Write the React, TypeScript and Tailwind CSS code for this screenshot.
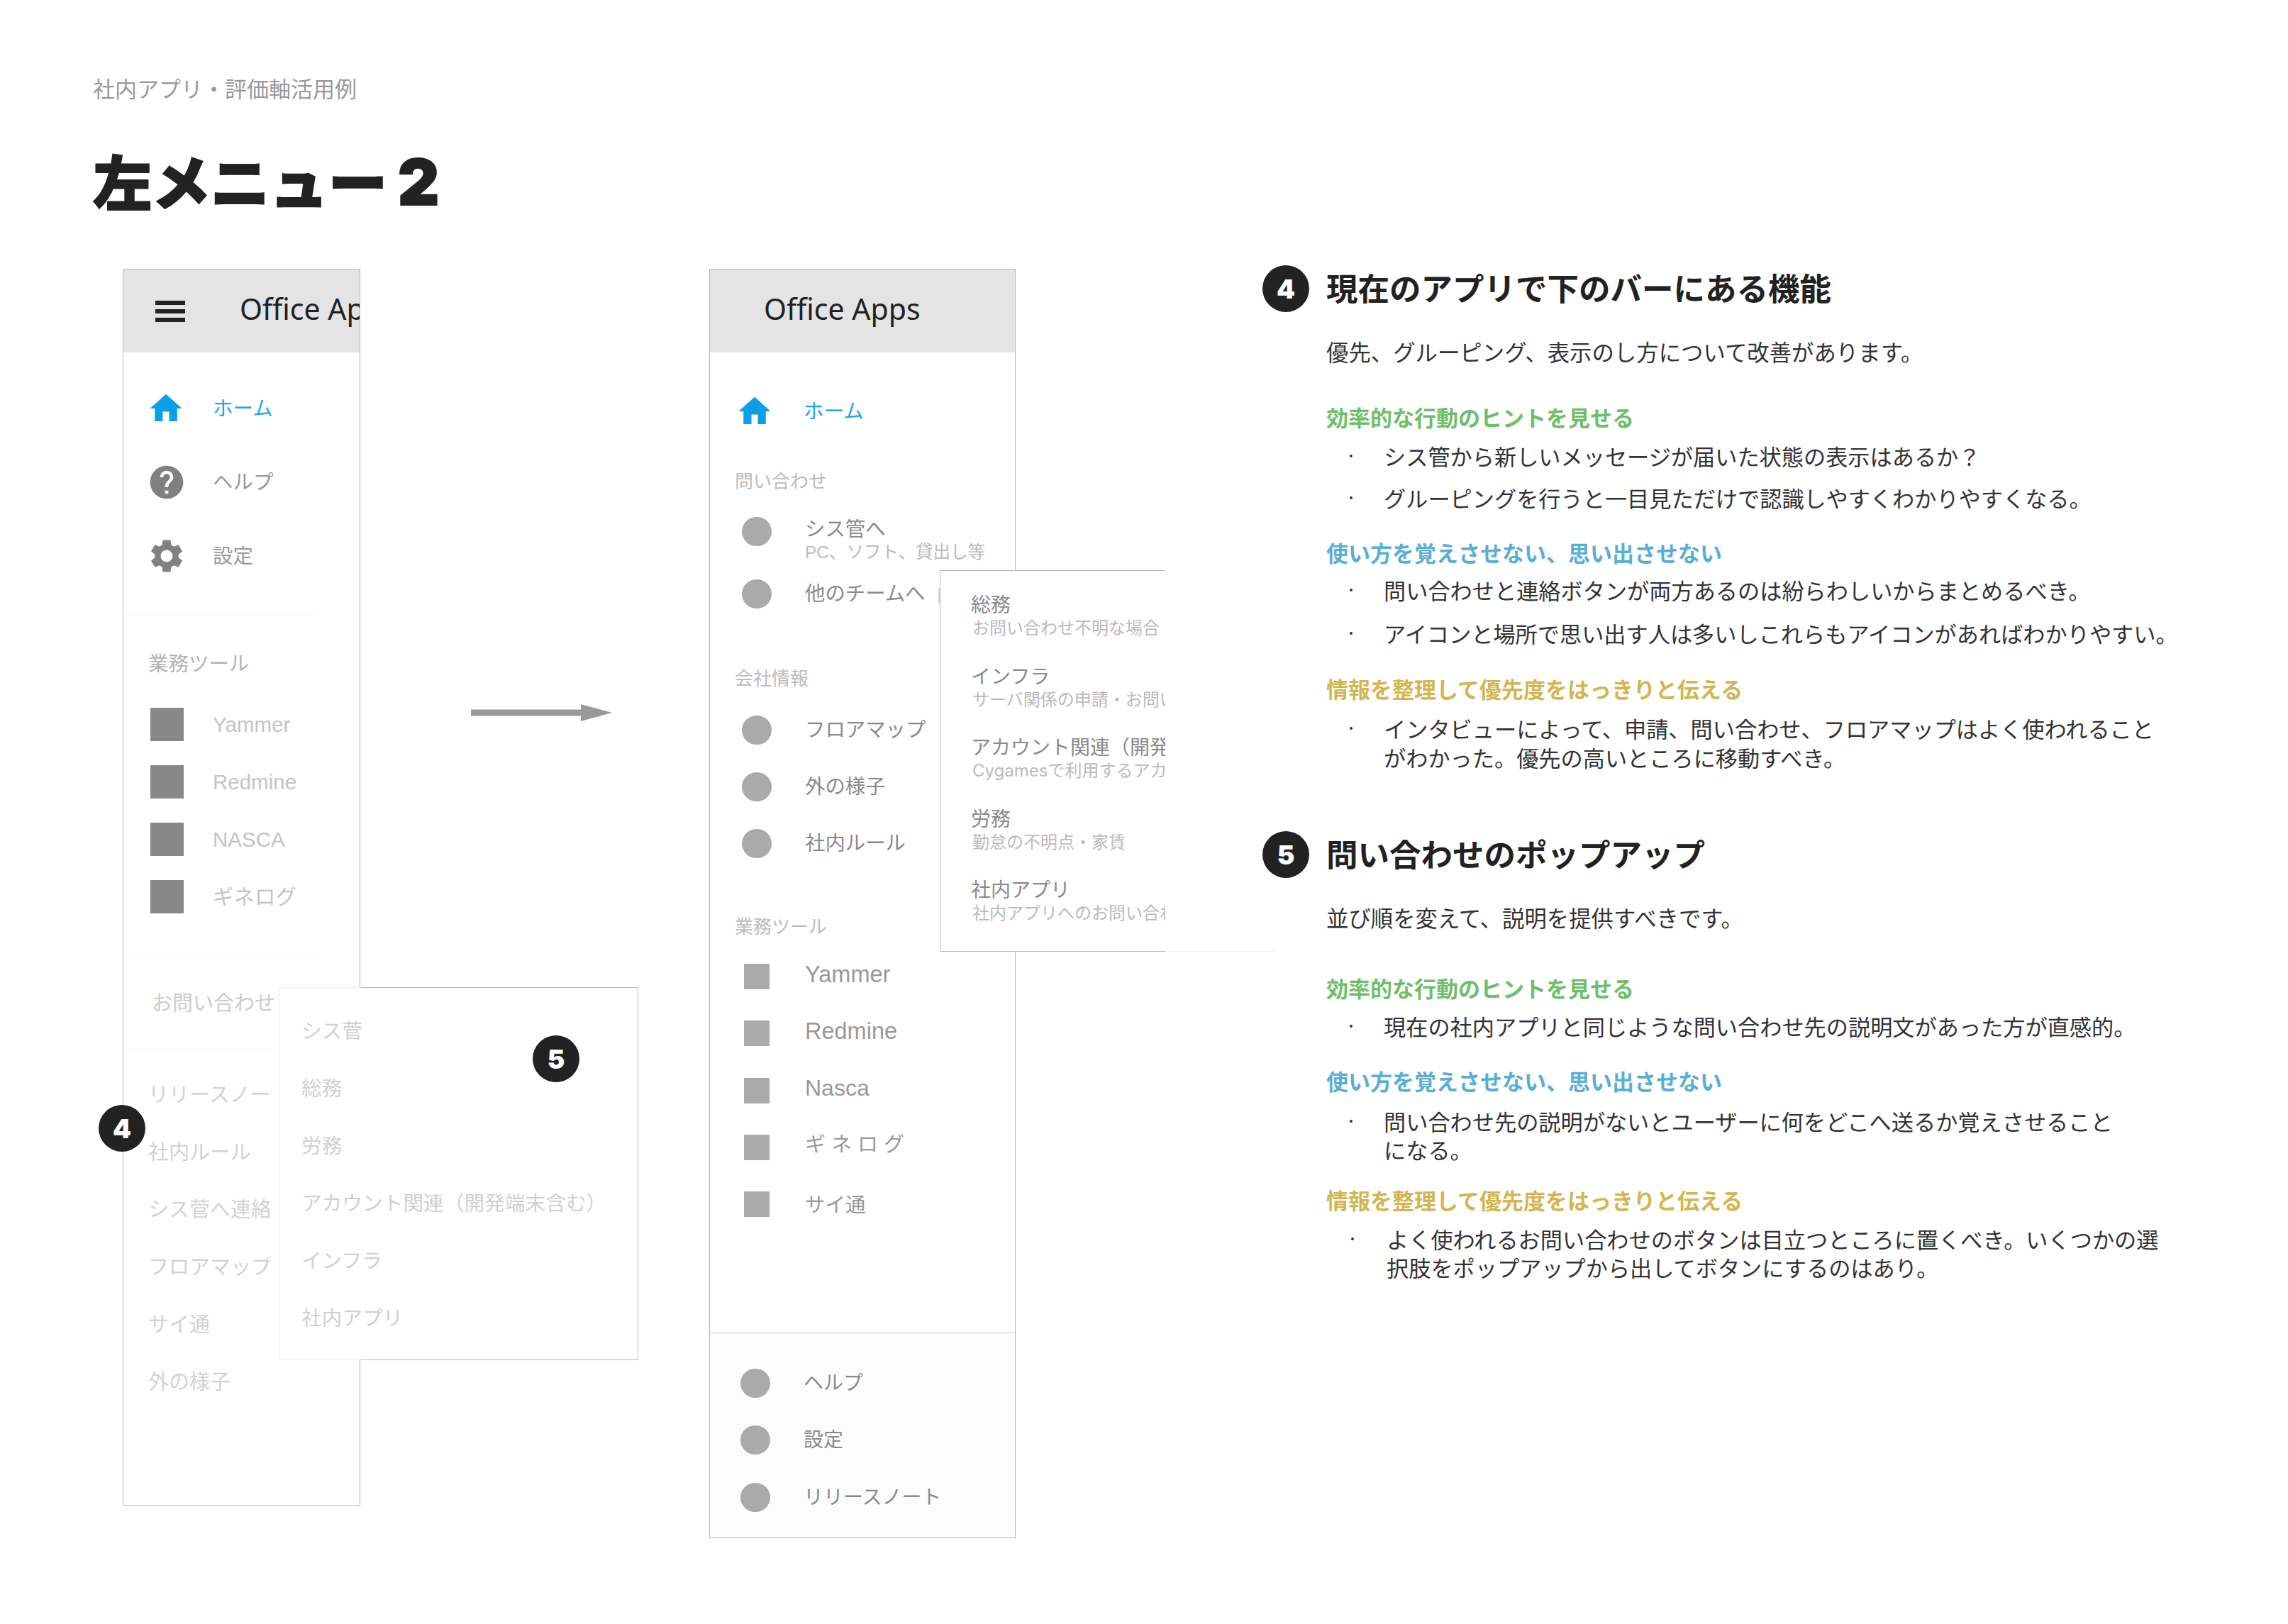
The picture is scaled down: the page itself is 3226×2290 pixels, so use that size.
import { MdHelp, MdHome, MdSettings } from "react-icons/md";

function Badge({ n, className = "" }: { n: number; className?: string }) {
  return (
    <div
      className={`flex h-[66px] w-[66px] shrink-0 items-center justify-center rounded-full bg-[#222222] font-['Inter',sans-serif] text-[37px] leading-none font-black text-white ${className}`}
    >
      {n}
    </div>
  );
}

function SideRow({
  icon,
  slot,
  label,
  height,
  color,
}: {
  icon?: React.ReactNode;
  slot: string;
  label: string;
  height: string;
  color: string;
}) {
  return (
    <div className={`flex items-center ${height}`}>
      <div className={`flex shrink-0 items-center ${slot}`}>{icon}</div>
      <span className={`whitespace-nowrap leading-none ${color}`}>{label}</span>
    </div>
  );
}

function LeftPanel() {
  const tools = ["Yammer", "Redmine", "NASCA", "ギネログ"];
  const links = ["リリースノート", "社内ルール", "シス菅へ連絡", "フロアマップ", "サイ通", "外の様子"];
  const popupItems = ["シス菅", "総務", "労務", "アカウント関連（開発端末含む）", "インフラ", "社内アプリ"];

  return (
    <div className="relative ml-[42px] h-[1744px] w-[335px] shrink-0 border border-[#b8b8b8] bg-white">
      {/* Header */}
      <div className="flex h-[117px] items-center overflow-hidden bg-[#e4e4e4]">
        <div className="ml-[45px] flex w-[42px] shrink-0 flex-col gap-[6px]">
          <div className="h-[6px] bg-[#222222]" />
          <div className="h-[6px] bg-[#222222]" />
          <div className="h-[6px] bg-[#222222]" />
        </div>
        <span className="-mt-[6px] ml-[77px] whitespace-nowrap font-['Noto_Sans',sans-serif] text-[41px] text-[#222222]">
          Office Apps
        </span>
      </div>

      <div className="pt-[27px]">
        <SideRow
          height="h-[104px]"
          slot="w-[126px] pl-[33px]"
          color="-mt-[4px] text-[28.5px] text-[#1ea6ea]"
          label="ホーム"
          icon={<MdHome size={54} color="#0a9fe6" />}
        />
        <SideRow
          height="h-[104px]"
          slot="w-[126px] pl-[33px]"
          color="-mt-[4px] text-[28.5px] text-[#999999]"
          label="ヘルプ"
          icon={<MdHelp size={56} color="#808080" />}
        />
        <SideRow
          height="h-[104px]"
          slot="w-[126px] pl-[33px]"
          color="-mt-[4px] text-[28.5px] text-[#999999]"
          label="設定"
          icon={<MdSettings size={56} color="#808080" />}
        />
      </div>

      <div className="mt-[30px] h-px w-[269px] bg-[#f6f6f6]" />

      <div className="mt-[47px] flex h-[40px] items-center pl-[35px] text-[28.5px] text-[#b4b4b4]">業務ツール</div>
      <div className="mt-[27px]">
        {tools.map((t) => (
          <SideRow
            key={t}
            height="h-[81px]"
            slot="w-[126px] pl-[38px]"
            color="font-['Liberation_Sans','Noto_Sans_CJK_JP',sans-serif] text-[29.5px] text-[#c4c4c4]"
            label={t}
            icon={<div className="h-[47px] w-[47px] bg-[#888888]" />}
          />
        ))}
      </div>

      <div className="mt-[44px] h-px w-[269px] bg-[#f6f6f6]" />
      <div className="-mt-[4px] flex h-[134px] items-center pl-[40px] text-[29px] text-[#cccccc]">お問い合わせ</div>
      <div className="h-px bg-[#f6f6f6]" />

      <div className="mt-[20px] w-[207px] overflow-hidden pl-[35px]">
        {links.map((l) => (
          <div key={l} className="flex h-[81px] items-center text-[29px] whitespace-nowrap text-[#d2d2d2]">
            {l}
          </div>
        ))}
      </div>

      {/* Popup */}
      <div className="absolute top-[1012px] left-[220px] h-[526px] w-[506px] border border-[#bbbbbb] border-l-[#ededed] bg-white pt-[18px] pl-[30px]">
        <div className="absolute -top-px -left-px h-px w-[115px] bg-[#ededed]" />
        <div className="absolute -bottom-px -left-px h-px w-[115px] bg-[#ededed]" />
        {popupItems.map((p) => (
          <div key={p} className="flex h-[81px] items-center text-[28.7px] whitespace-nowrap text-[#d0d0d0]">
            {p}
          </div>
        ))}
        <Badge n={5} className="absolute top-[67px] left-[356px]" />
      </div>

      <Badge n={4} className="absolute top-[1178px] -left-[35px]" />
    </div>
  );
}

function Arrow() {
  return (
    <svg viewBox="0 0 199 24" className="mt-[614px] ml-[156px] h-[24px] w-[199px] shrink-0">
      <rect x="0" y="7.5" width="156" height="9" fill="#999999" />
      <polygon points="155,0 199,12 155,24" fill="#999999" />
    </svg>
  );
}

function MidRow({ label, sub, h = "h-[80px]" }: { label: string; sub?: string; h?: string }) {
  return (
    <div className={`flex items-center pl-[45px] ${h}`}>
      <div className="h-[41px] w-[42px] shrink-0 rounded-full bg-[#aaaaaa]" />
      <div className={`ml-[47px] whitespace-nowrap ${sub ? "mt-[26px]" : "-mt-[4px]"}`}>
        <div className="text-[28.4px] leading-[34px] text-[#8a8a8a]">{label}</div>
        {sub && (
          <div className="font-['Liberation_Sans','Noto_Sans_CJK_JP',sans-serif] text-[24.5px] leading-[36px] text-[#bbbbbb]">
            {sub}
          </div>
        )}
      </div>
    </div>
  );
}

function MidLabel({ text, className }: { text: string; className: string }) {
  return <div className={`flex h-[40px] items-center pl-[35px] text-[26px] text-[#bcbcbc] ${className}`}>{text}</div>;
}

function MidPanel() {
  const tools = [
    { name: "Yammer", cls: "-mt-[6px] text-[32.5px]" },
    { name: "Redmine", cls: "-mt-[6px] text-[32.5px]" },
    { name: "Nasca", cls: "-mt-[8px] text-[32px]" },
    { name: "ギネログ", cls: "-mt-[6px] text-[29px] tracking-[8px]" },
    { name: "サイ通", cls: "mt-[2px] text-[28.5px]" },
  ];
  const footer = ["ヘルプ", "設定", "リリースノート"];
  const popup = [
    ["総務", "お問い合わせ不明な場合"],
    ["インフラ", "サーバ関係の申請・お問い合わせ"],
    ["アカウント関連（開発端末含む）", "Cygamesで利用するアカウント"],
    ["労務", "勤怠の不明点・家賃"],
    ["社内アプリ", "社内アプリへのお問い合わせ"],
  ];

  return (
    <div className="relative ml-[137px] flex h-[1790px] w-[432px] shrink-0 flex-col border border-[#b8b8b8] bg-white">
      <div className="flex h-[117px] shrink-0 items-center bg-[#e4e4e4] pb-[6px] pl-[76px] font-['Noto_Sans',sans-serif] text-[41px] text-[#222222]">
        Office Apps
      </div>

      <div className="mt-[43px] flex h-[80px] items-center pl-[36px]">
        <MdHome size={54} color="#0a9fe6" className="shrink-0" />
        <span className="-mt-[4px] ml-[42px] text-[28.5px] leading-none text-[#1ea6ea]">ホーム</span>
      </div>

      <MidLabel text="問い合わせ" className="mt-[36px]" />
      <div className="mt-[9px]">
        <MidRow h="h-[88px]" label="シス管へ" sub="PC、ソフト、貸出し等" />
        <MidRow h="h-[88px]" label="他のチームへ" />
      </div>

      <MidLabel text="会社情報" className="mt-[53px]" />
      <div className="mt-[15px]">
        <MidRow label="フロアマップ" />
        <MidRow label="外の様子" />
        <MidRow label="社内ルール" />
      </div>

      <MidLabel text="業務ツール" className="mt-[55px]" />
      <div className="mt-[13px]">
        {tools.map((t) => (
          <div key={t.name} className="flex h-[80.25px] items-center pl-[48px]">
            <div className="h-[36px] w-[36px] shrink-0 bg-[#aaaaaa]" />
            <span
              className={`ml-[50px] font-['Liberation_Sans','Noto_Sans_CJK_JP',sans-serif] whitespace-nowrap text-[#999999] ${t.cls}`}
            >
              {t.name}
            </span>
          </div>
        ))}
      </div>

      <div className="mt-auto h-[289px] border-t border-[#cccccc] bg-[#fcfcfc] pt-[30px]">
        {footer.map((f) => (
          <div key={f} className="flex h-[80.5px] items-center pl-[43px]">
            <div className="h-[41px] w-[42px] shrink-0 rounded-full bg-[#aaaaaa]" />
            <span className="-mt-[5px] ml-[47px] text-[28px] text-[#8a8a8a]">{f}</span>
          </div>
        ))}
      </div>

      <div className="absolute top-[449px] left-[322px] h-[22px] w-[2px] bg-[#d4d4d4]" />

      {/* Popup, cut off at its right edge */}
      <div className="absolute top-[424px] left-[324px] h-[538px] w-[318px] overflow-hidden border-y border-l border-[#b8b8b8] bg-white">
        <div className="pt-[29px]">
          {popup.map(([title, sub]) => (
            <div key={title} className="h-[100.5px] pl-[43px] whitespace-nowrap">
              <div className="text-[28px] leading-[34px] text-[#8a8a8a]">{title}</div>
              <div className="pl-[2px] font-['Inter','Noto_Sans_CJK_JP',sans-serif] text-[24px] leading-[35px] text-[#bbbbbb]">
                {sub}
              </div>
            </div>
          ))}
        </div>
      </div>
      <div className="absolute top-[961px] left-[642px] h-px w-[154px] bg-[#eeeeee]" />
    </div>
  );
}

function Bullet({ children, wide = false, className = "" }: { children: React.ReactNode; wide?: boolean; className?: string }) {
  return (
    <div className={`flex ${wide ? "pl-[125px]" : "pl-[123px]"} ${className}`}>
      <div className="mt-[18px] h-[4px] w-[4px] shrink-0 rounded-full bg-[#333333]" />
      <div className={`${wide ? "ml-[46px]" : "ml-[44px]"} whitespace-nowrap text-[31.2px] leading-[40.5px] text-[#333333]`}>
        {children}
      </div>
    </div>
  );
}

function Hint({ color, className, children }: { color: string; className: string; children: React.ReactNode }) {
  return <div className={`pl-[90px] text-[31px] leading-[40px] font-bold ${color} ${className}`}>{children}</div>;
}

function Notes() {
  return (
    <div className="-mt-[5px] ml-[348px] shrink-0">
      <div className="flex items-center gap-[24px]">
        <Badge n={4} />
        <h2 className="-mt-[4px] text-[44.5px] leading-none font-bold text-[#222222]">現在のアプリで下のバーにある機能</h2>
      </div>
      <p className="mt-[36px] pl-[90px] text-[31.4px] leading-[40px] text-[#333333]">
        優先、グルーピング、表示のし方について改善があります。
      </p>
      <Hint color="text-[#6fbe6a]" className="mt-[52px]">効率的な行動のヒントを見せる</Hint>
      <Bullet className="mt-[15px]">シス管から新しいメッセージが届いた状態の表示はあるか？</Bullet>
      <Bullet className="mt-[18px]">グルーピングを行うと一目見ただけで認識しやすくわかりやすくなる。</Bullet>
      <Hint color="text-[#5aadd6]" className="mt-[37px]">使い方を覚えさせない、思い出させない</Hint>
      <Bullet className="mt-[13px]">問い合わせと連絡ボタンが両方あるのは紛らわしいからまとめるべき。</Bullet>
      <Bullet className="mt-[20px]">アイコンと場所で思い出す人は多いしこれらもアイコンがあればわかりやすい。</Bullet>
      <Hint color="text-[#d1b651]" className="mt-[38px]">情報を整理して優先度をはっきりと伝える</Hint>
      <Bullet className="mt-[16px]">
        インタビューによって、申請、問い合わせ、フロアマップはよく使われること
        <br />
        がわかった。優先の高いところに移動すべき。
      </Bullet>

      <div className="mt-[84px] flex items-center gap-[24px]">
        <Badge n={5} />
        <h2 className="-mt-[4px] text-[44.5px] leading-none font-bold text-[#222222]">問い合わせのポップアップ</h2>
      </div>
      <p className="mt-[36px] pl-[90px] text-[31.4px] leading-[40px] text-[#333333]">
        並び順を変えて、説明を提供すべきです。
      </p>
      <Hint color="text-[#6fbe6a]" className="mt-[59px]">効率的な行動のヒントを見せる</Hint>
      <Bullet className="mt-[14px]">現在の社内アプリと同じような問い合わせ先の説明文があった方が直感的。</Bullet>
      <Hint color="text-[#5aadd6]" className="mt-[36px]">使い方を覚えさせない、思い出させない</Hint>
      <Bullet className="mt-[17px]">
        問い合わせ先の説明がないとユーザーに何をどこへ送るか覚えさせること
        <br />
        になる。
      </Bullet>
      <Hint color="text-[#d1b651]" className="mt-[30px]">情報を整理して優先度をはっきりと伝える</Hint>
      <Bullet wide className="mt-[15px]">
        よく使われるお問い合わせのボタンは目立つところに置くべき。いくつかの選
        <br />
        択肢をポップアップから出してボタンにするのはあり。
      </Bullet>
    </div>
  );
}

export default function App() {
  return (
    <div className="h-[2290px] w-[3226px] overflow-hidden bg-white pt-[102px] pl-[131px] font-['Noto_Sans_CJK_JP',sans-serif]">
      <div className="text-[31px] leading-[44px] text-[#999999]">社内アプリ・評価軸活用例</div>
      <h1 className="mt-[57px] text-[83px] leading-[100px] font-black text-[#222222] [-webkit-text-stroke:2px_#222222]">
        左メニュー <span className="-ml-[4px] font-['Inter',sans-serif] text-[90px] leading-none">2</span>
      </h1>
      <div className="mt-[76px] flex items-start">
        <LeftPanel />
        <Arrow />
        <MidPanel />
        <Notes />
      </div>
    </div>
  );
}
